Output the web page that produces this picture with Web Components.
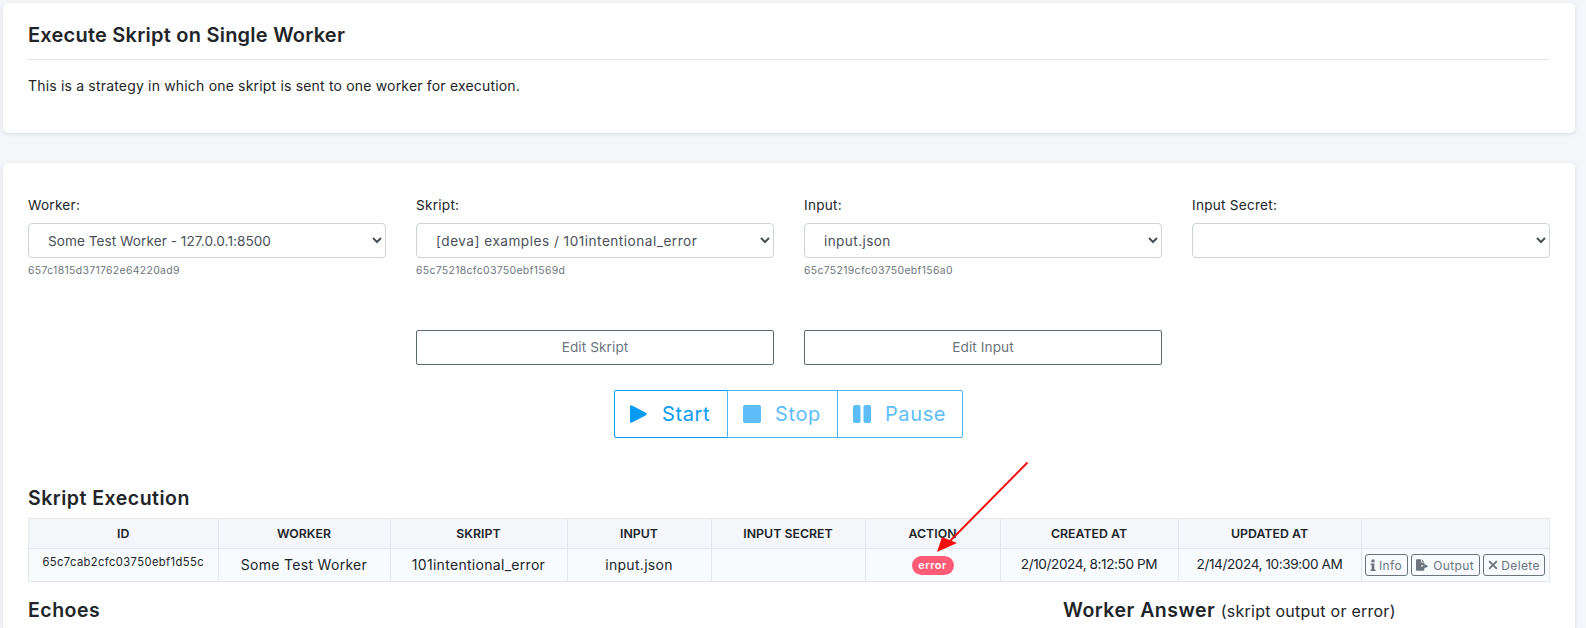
<!DOCTYPE html>
<html lang="en"><head><meta charset="utf-8"><title>Execute Skript</title>
<style>
html,body{margin:0;height:628px;overflow:hidden;background:#f5f6fa}
body{font-family:Inter,"Noto Sans",sans-serif;color:#212529;position:relative}
</style></head><body>
<page-shell>
<app-card style="height:130px">
  <card-title>Execute Skript on Single Worker</card-title>
  <intro-text>This is a strategy in which one skript is sent to one worker for execution.</intro-text>
</app-card>
<app-card style="margin-top:30px;padding-top:32px;height:465px;border-radius:5px 5px 0 0">
  <form-row>
    <form-field label="Worker:" value="Some Test Worker - 127.0.0.1:8500" note="657c1815d371762e64220ad9" ls=".05"></form-field>
    <form-field label="Skript:" value="[deva] examples / 101intentional_error" note="65c75218cfc03750ebf1569d" ls=".5"></form-field>
    <form-field label="Input:" value="input.json" note="65c75219cfc03750ebf156a0" ls=".4"></form-field>
    <form-field label="Input Secret:" value=""></form-field>
  </form-row>
  <form-row style="margin-top:52px">
    <span></span><edit-button>Edit Skript</edit-button><edit-button>Edit Input</edit-button><span></span>
  </form-row>
  <control-group></control-group>
  <section-title style="margin-top:46px">Skript Execution</section-title>
  <execution-table></execution-table>
  <two-cols>
    <section-title>Echoes</section-title>
    <section-title>Worker Answer <small-note>(skript output or error)</small-note></section-title>
  </two-cols>
</app-card>
</page-shell>
<red-arrow></red-arrow>
<script>
function def(name, css, html){
  customElements.define(name, class extends HTMLElement{
    connectedCallback(){
      if(this.shadowRoot) return;
      const r=this.attachShadow({mode:'open'});
      r.innerHTML='<style>'+css+'</style>'+(typeof html==='function'?html(this):html);
    }
  });
}
def('page-shell',':host{display:block;padding:3px 11px 0 3px}','<slot></slot>');
def('app-card',':host{display:block;box-sizing:border-box;background:#fff;border-radius:5px;box-shadow:0 1px 4px rgba(40,50,90,.13);padding:0 25px}','<slot></slot>');
def('card-title',':host{display:block;font-size:20px;font-weight:600;letter-spacing:.23px;line-height:30px;padding:17px 0 9px;border-bottom:1px solid #e4e6ea;color:#212529}','<slot></slot>');
def('intro-text',':host{display:block;font-size:14px;letter-spacing:.18px;line-height:21px;margin-top:15px;color:#212529}','<slot></slot>');
def('form-row',':host{display:grid;grid-template-columns:repeat(4,358px);column-gap:30px;align-items:start}','<slot></slot>');
def('form-field',`:host{display:block}
label{display:block;font-size:13.6px;letter-spacing:.25px;line-height:20px;height:20px;margin-bottom:8px;color:#212529}
select{display:block;box-sizing:border-box;width:100%;height:35px;background:#fff;border:1px solid #ced4da;border-radius:4px;padding:0 15px;font:13.6px Inter,sans-serif;color:#495057}
.n{font-size:10.4px;line-height:15px;height:15px;margin-top:5px;color:#6c757d;letter-spacing:.35px}`,
 h=>`<label>${h.getAttribute('label')}</label><select style="letter-spacing:${h.getAttribute('ls')||0}px"><option>${h.getAttribute('value')}</option></select><div class="n">${h.getAttribute('note')||''}</div>`);
def('edit-button',`:host{display:flex;box-sizing:border-box;height:35px;align-items:center;justify-content:center;border:1px solid #5a6a72;border-radius:2px;font-size:13.6px;letter-spacing:.1px;color:#6c757d;padding-bottom:2px}`,'<slot></slot>');
const P={play:'<path d="M3 1.6C1.9 1 1 1.5 1 2.8v14.4c0 1.3.9 1.8 2 1.2l14-7.2c1.1-.6 1.1-1.8 0-2.4z"/>',
stop:'<rect x="1" y="1" width="18" height="18" rx="2"/>',
pause:'<rect x="1" y="1" width="7.5" height="18" rx="2"/><rect x="11.5" y="1" width="7.5" height="18" rx="2"/>'};
def('control-group',`:host{display:flex;width:fit-content;margin:25px auto 0;height:48px;box-sizing:border-box;position:relative;left:-.5px}
div{display:flex;align-items:center;box-sizing:border-box;height:48px;border:1px solid #009ef7;margin-left:-1px;font-size:20px;letter-spacing:.6px;color:#0a9bf5;padding-left:14px}
div.d{color:#5dbdfb;border-color:#4cb4f9}
svg{width:20px;height:20px;fill:currentColor;margin-right:13px;flex:none}
.a{width:114px;margin-left:0;border-radius:2px 0 0 2px}.b{width:111px;border-left-color:#009ef7}.c{width:126px;border-left-color:#009ef7;border-radius:0 2px 2px 0}`,
`<div class="a"><svg viewBox="0 0 20 20">${P.play}</svg>Start</div><div class="b d"><svg viewBox="0 0 20 20">${P.stop}</svg>Stop</div><div class="c d"><svg viewBox="0 0 20 20">${P.pause}</svg>Pause</div>`);
def('section-title',':host{display:block;font-size:19.5px;font-weight:600;letter-spacing:.5px;line-height:28px;color:#212529}','<slot></slot>');
def('small-note',':host{font-size:16px;font-weight:400;letter-spacing:.25px}','<slot></slot>');
def('two-cols',':host{display:grid;grid-template-columns:1005px 487px;column-gap:30px;margin-top:14px}','<slot></slot>');
def('status-badge',':host{display:inline-block;background:#ff5b76;color:#fff;font-size:11px;font-weight:600;letter-spacing:.5px;line-height:19px;height:19px;width:42px;text-align:center;border-radius:10px}','<slot></slot>');
def('mini-button',`:host{display:inline-flex;align-items:center;box-sizing:border-box;height:22px;padding:0 4.5px;gap:3px;border:1px solid #6c757d;border-radius:3px;font-size:12px;letter-spacing:.4px;color:#6c757d;margin-left:3px}:host(:first-child){margin-left:0}
svg{height:12px;fill:#6c757d;display:block}`,
h=>{const k=h.getAttribute('icon');const m={
info:'<svg viewBox="0 0 8 16" style="width:6px"><circle cx="4" cy="2.5" r="2.3"/><path d="M.8 6h5v8h1.6v2H.6v-2h1.6V8H.8z"/></svg>',
out:'<svg viewBox="0 0 17 14" style="width:14px"><path d="M0 1a1 1 0 0 1 1-1h5v4h4v3H6.5v2H10v4a1 1 0 0 1-1 1H1a1 1 0 0 1-1-1zM7 0l3 3H7z"/><path d="M10 5.4l5 3-5 3V9.6H8V7.3h2z"/></svg>',
x:'<svg viewBox="0 0 12 12" style="width:10px"><path d="M2.2.6 6 4.4 9.8.6l1.6 1.6L7.6 6l3.8 3.8-1.6 1.6L6 7.6l-3.8 3.8L.6 9.8 4.4 6 .6 2.2z"/></svg>'};
return m[k]+'<slot></slot>';});
def('execution-table',`:host{display:block;margin-top:6px}
table{border-collapse:collapse;table-layout:fixed;width:1522px}
th,td{border:1px solid #e3e6ec;text-align:center;padding:0;white-space:nowrap}
th{height:29px;background:#f4f6fa;font-size:12.3px;font-weight:600;letter-spacing:.03px;color:#212529}
td{height:30px;padding-bottom:2px;background:#f7fbfe;font-size:14px;letter-spacing:.3px;color:#212529}
td.id{font-size:11.2px;letter-spacing:.4px;vertical-align:top;padding-top:6px;padding-bottom:0;height:26px}
td.dt{font-size:13.6px;letter-spacing:-.41px}
td.btn{font-size:0;text-align:left;padding-left:3px;padding-bottom:0;height:32px}`,
`<table><colgroup><col style="width:189.5px"><col style="width:172px"><col style="width:177px"><col style="width:144px"><col style="width:154px"><col style="width:135px"><col style="width:178px"><col style="width:183px"><col></colgroup>
<thead><tr><th>ID</th><th>WORKER</th><th>SKRIPT</th><th>INPUT</th><th>INPUT SECRET</th><th>ACTION</th><th>CREATED AT</th><th>UPDATED AT</th><th></th></tr></thead>
<tbody><tr><td class="id">65c7cab2cfc03750ebf1d55c</td><td>Some Test Worker</td><td>101intentional_error</td><td>input.json</td><td></td><td style="padding:0"><status-badge>error</status-badge></td><td class="dt">2/10/2024, 8:12:50 PM</td><td class="dt">2/14/2024, 10:39:00 AM</td><td class="btn"><mini-button icon="info">Info</mini-button><mini-button icon="out">Output</mini-button><mini-button icon="x">Delete</mini-button></td></tr></tbody></table>`);
def('red-arrow',':host{position:absolute;left:0;top:0;width:1586px;height:628px;pointer-events:none}svg{display:block}',
`<svg width="1586" height="628" viewBox="0 0 1586 628"><path d="M1027.5 462.5 950 541" stroke="#f60d0d" stroke-width="2" fill="none"/><path d="M937 552 942 537 957 543z" fill="#f60d0d"/></svg>`);
</script>
</body></html>
